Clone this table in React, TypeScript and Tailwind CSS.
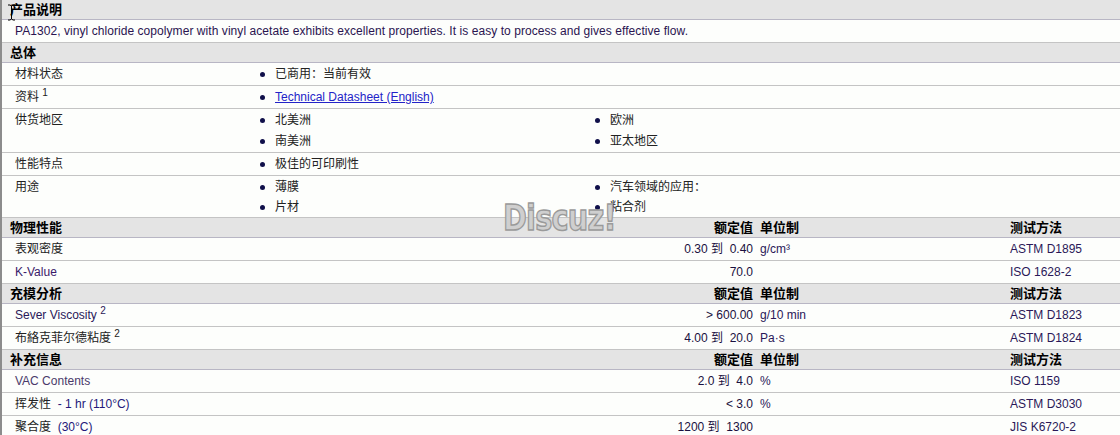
import React from "react";

const font = "font-['Liberation_Sans','Noto_Sans_CJK_SC',sans-serif]";

function Bullet({ children, tight }: { children: React.ReactNode; tight?: boolean }) {
  return (
    <li className={`flex items-center ${tight ? "leading-[20px]" : "leading-[21px]"}`}>
      <span className="w-[5px] h-[5px] rounded-full bg-[#10104a] mr-[10px] shrink-0" />
      <span>{children}</span>
    </li>
  );
}

function SectionHead({ title, cols }: { title: string; cols?: boolean }) {
  return (
    <div className="flex h-[20px] leading-[19px] bg-[#e4e4e4] border-b border-[#b8b6c4] text-[13px] font-bold text-black">
      <div className="pl-[8px] w-[578px]">{title}</div>
      {cols && (
        <>
          <div className="w-[173px] text-right">额定值</div>
          <div className="w-[250px] pl-[7px]">单位制</div>
          <div className="pl-[7px]">测试方法</div>
        </>
      )}
    </div>
  );
}

function ListRow({
  label,
  left,
  right,
  tight,
}: {
  label: React.ReactNode;
  left: React.ReactNode[];
  right?: React.ReactNode[];
  tight?: boolean;
}) {
  return (
    <div className="flex pt-[1px] border-b border-[#c4c4c4] text-[12px] text-[#222]">
      <div className="w-[258px] pl-[13px] leading-[21px]">{label}</div>
      <ul className="w-[335px]">
        {left.map((x, i) => (
          <Bullet key={i} tight={tight}>
            {x}
          </Bullet>
        ))}
      </ul>
      {right && (
        <ul>
          {right.map((x, i) => (
            <Bullet key={i} tight={tight}>
              {x}
            </Bullet>
          ))}
        </ul>
      )}
    </div>
  );
}

function PropRow({
  label,
  value,
  unit,
  method,
}: {
  label: React.ReactNode;
  value: React.ReactNode;
  unit?: string;
  method: string;
}) {
  return (
    <div className="flex h-[23px] pt-[1px] leading-[21px] border-b border-[#c4c4c4] text-[12px] text-[#222]">
      <div className="w-[578px] pl-[13px]">{label}</div>
      <div className="w-[173px] text-right text-[#1a1040] whitespace-pre">{value}</div>
      <div className="w-[250px] pl-[7px] text-[#2a1858]">{unit}</div>
      <div className="pl-[7px] text-[#2a1858]">{method}</div>
    </div>
  );
}

export default function App() {
  return (
    <div className={`relative w-[1120px] h-[435px] overflow-hidden bg-[#fdfefc] border-l-2 border-[#8c8c8c] ${font}`}>
      <SectionHead title="产品说明" />
      <div className="h-[23px] pt-[1px] leading-[21px] pl-[13px] border-b border-[#c4c4c4] text-[12px] tracking-[0.06px] text-[#2a1450]">
        PA1302, vinyl chloride copolymer with vinyl acetate exhibits excellent properties. It is easy to process and gives effective flow.
      </div>
      <SectionHead title="总体" />
      <ListRow label="材料状态" left={["已商用：当前有效"]} />
      <ListRow
        label={
          <>
            资料 <sup className="text-[10px]">1</sup>
          </>
        }
        left={[
          <a key="a" href="#" className="text-[#2323c8] underline">
            Technical Datasheet (English)
          </a>,
        ]}
      />
      <ListRow label="供货地区" left={["北美洲", "南美洲"]} right={["欧洲", "亚太地区"]} />
      <ListRow label="性能特点" left={["极佳的可印刷性"]} />
      <ListRow label="用途" tight left={["薄膜", "片材"]} right={["汽车领域的应用：", "粘合剂"]} />

      <SectionHead title="物理性能" cols />
      <PropRow label="表观密度" value="0.30 到  0.40" unit="g/cm³" method="ASTM D1895" />
      <PropRow label={<span className="text-[#3a1a6a]">K-Value</span>} value="70.0" method="ISO 1628-2" />

      <SectionHead title="充模分析" cols />
      <PropRow
        label={
          <span className="text-[#2a1858]">
            Sever Viscosity <sup className="text-[10px]">2</sup>
          </span>
        }
        value="> 600.00"
        unit="g/10 min"
        method="ASTM D1823"
      />
      <PropRow
        label={
          <>
            布絡克菲尔德粘度 <sup className="text-[10px]">2</sup>
          </>
        }
        value="4.00 到  20.0"
        unit="Pa·s"
        method="ASTM D1824"
      />

      <SectionHead title="补充信息" cols />
      <PropRow label={<span className="text-[#4a3a6a]">VAC Contents</span>} value="2.0 到  4.0" unit="%" method="ISO 1159" />
      <PropRow
        label={
          <>
            挥发性 <span className="text-[#24187a]">&nbsp;- 1 hr (110°C)</span>
          </>
        }
        value="< 3.0"
        unit="%"
        method="ASTM D3030"
      />
      <PropRow
        label={
          <>
            聚合度 <span className="text-[#24187a]">&nbsp;(30°C)</span>
          </>
        }
        value="1200 到  1300"
        method="JIS K6720-2"
      />

      {/* watermark */}
      <div className="absolute left-[501px] top-[199px] origin-left scale-x-[0.8] text-[36px] leading-[38px] font-bold font-['DejaVu_Sans',sans-serif] tracking-[-1px] text-[#cfcfcf] [-webkit-text-stroke:1.5px_#9a9a9a] pointer-events-none">
        Discuz!
      </div>

      {/* text cursor */}
      <svg className="absolute left-[5px] top-[4px]" width="9" height="17" viewBox="0 0 9 17">
        <path d="M1 1h2l1.5 1 1.5-1h2M4.5 2v13M1 16h2l1.5-1 1.5 1h2" stroke="#000" strokeWidth="1" fill="none" />
      </svg>
    </div>
  );
}
